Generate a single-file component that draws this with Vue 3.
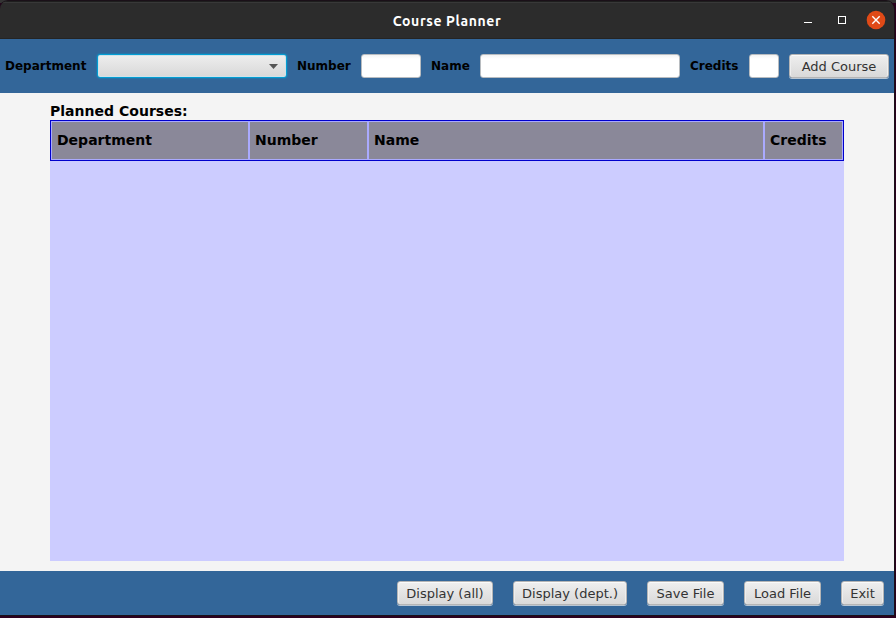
<script setup>
import { ref } from 'vue'

const department = ref('')
const fields = ref([
  { label: 'Number', size: 'number', value: '' },
  { label: 'Name', size: 'name', value: '' },
  { label: 'Credits', size: 'credits', value: '' }
])
const columns = ['Department', 'Number', 'Name', 'Credits']
const actions = [
  { text: 'Display (all)', size: 'all' },
  { text: 'Display (dept.)', size: 'dept' },
  { text: 'Save File', size: 'file' },
  { text: 'Load File', size: 'file' },
  { text: 'Exit', size: 'exit' }
]
</script>

<template>
  <div class="desktop">
    <div class="window">
      <header class="titlebar">
        <h1 class="title">Course Planner</h1>
        <svg class="controls" width="100" height="37" viewBox="0 0 100 37">
          <path d="M10 20.5h8" stroke="#fff" />
          <rect x="44.5" y="14.5" width="7" height="7" fill="none" stroke="#fff" />
          <circle cx="82" cy="18" r="9.3" fill="#e04a17" />
          <path d="M78.3 14.3l7.4 7.4M85.7 14.3l-7.4 7.4" stroke="#fff" stroke-width="1.4" />
        </svg>
      </header>

      <div class="toolbar">
        <label class="label label-department">Department</label>
        <button class="combo">
          {{ department }}
          <svg width="9" height="5" viewBox="0 0 9 5"><path d="M0 0h9L4.5 5z" fill="#555" /></svg>
        </button>
        <template v-for="f in fields" :key="f.label">
          <label class="label" :class="'label-' + f.size">{{ f.label }}</label>
          <input v-model="f.value" class="field" :class="'field-' + f.size" type="text" />
        </template>
        <button class="btn btn-add">Add Course</button>
      </div>

      <main class="content">
        <h2 class="heading">Planned Courses:</h2>
        <div class="table">
          <div class="head">
            <div v-for="c in columns" :key="c" class="cell">{{ c }}</div>
          </div>
        </div>
      </main>

      <footer class="footer">
        <button v-for="a in actions" :key="a.text" class="btn" :class="'btn-' + a.size">{{ a.text }}</button>
      </footer>
    </div>
  </div>
</template>

<style>
body {
  margin: 0;
  overflow: hidden;
}
</style>

<style scoped>
.desktop {
  width: 896px;
  height: 618px;
  box-sizing: border-box;
  padding-top: 1px;
  background: linear-gradient(#343434 3px, #2c001e 3px);
  font-family: "DejaVu Sans", sans-serif;
}
.window {
  display: flex;
  flex-direction: column;
  width: 894px;
  height: 614px;
  border-radius: 8px 8px 0 0;
  overflow: hidden;
  box-shadow: 0 0 0 1px #1a1018;
}
.titlebar {
  display: grid;
  grid-template-columns: 100px 1fr 100px;
  align-items: center;
  height: 38px;
  box-sizing: border-box;
  border-top: 1px solid #1e1e1e;
  border-bottom: 1px solid #242424;
  background: #2c2c2c;
  box-shadow: inset 0 1px #383838;
}
.title {
  grid-column: 2;
  margin: 0;
  padding-top: 1px;
  text-align: center;
  color: #fff;
  font: bold 14px/20px Ubuntu, "Noto Sans", sans-serif;
  letter-spacing: 0.6px;
}
.controls {
  display: block;
}
.toolbar {
  display: flex;
  gap: 10px;
  height: 54px;
  box-sizing: border-box;
  padding: 15px 5px;
  background: #336699;
}
.label {
  flex: none;
  font-size: 12px;
  font-weight: bold;
  line-height: 24px;
  white-space: nowrap;
  color: #000;
}
.label-department { width: 82px; }
.label-number { width: 54px; }
.label-name { width: 39px; }
.label-credits { width: 49px; }
.combo {
  display: flex;
  align-items: center;
  justify-content: flex-end;
  flex: none;
  width: 190px;
  height: 24px;
  box-sizing: border-box;
  padding: 1px 8px 0 0;
  border: 1px solid #039ed3;
  border-radius: 3px;
  background: linear-gradient(#eee, #d8d8d8);
  box-shadow: 0 0 2px #039ed3, inset 0 0 0 1px #cfe2ea;
}
.field {
  flex: none;
  height: 24px;
  box-sizing: border-box;
  padding: 0 6px;
  border: 1px solid #b8bcc0;
  border-radius: 3px;
  outline: none;
  background: linear-gradient(#f3f3f3, #fff 4px);
  font: 13px "DejaVu Sans", sans-serif;
}
.field-number { width: 60px; }
.field-name { width: 200px; }
.field-credits { width: 30px; }
.btn {
  flex: none;
  height: 24px;
  box-sizing: border-box;
  padding: 2px 0 0;
  border: 1px solid #b5b5b5;
  border-radius: 3px;
  background: linear-gradient(#efefef, #d9d9d9);
  box-shadow: inset 0 1px #fafafa, inset 1px 0 #eee, inset -1px 0 #eee, 0 1px #b9c6d3;
  color: #333;
  font: 13px/20px "DejaVu Sans", sans-serif;
  white-space: nowrap;
}
.btn-add { width: 100px; }
.btn-all { width: 96px; }
.btn-dept { width: 114px; }
.btn-file { width: 77px; }
.btn-exit { width: 43px; }
.content {
  display: flex;
  flex-direction: column;
  flex: 1;
  padding: 10px 50px;
  background: #f4f4f4;
}
.heading {
  margin: 0;
  height: 17px;
  font-size: 14px;
  font-weight: bold;
  line-height: 17px;
  letter-spacing: 0.02px;
}
.table {
  flex: 1;
  width: 794px;
  background: #ccccff;
}
.head {
  display: grid;
  grid-template-columns: 198px 119px 396px 79px;
  height: 41px;
  box-sizing: border-box;
  border: 1px solid #0000cc;
}
.cell {
  padding-left: 5px;
  border: 1px solid #aaaaff;
  background: #8a8899;
  font-size: 14px;
  font-weight: bold;
  line-height: 37px;
}
.footer {
  display: flex;
  justify-content: flex-end;
  gap: 20px;
  height: 44px;
  box-sizing: border-box;
  padding: 10px;
  background: #336699;
}
</style>
